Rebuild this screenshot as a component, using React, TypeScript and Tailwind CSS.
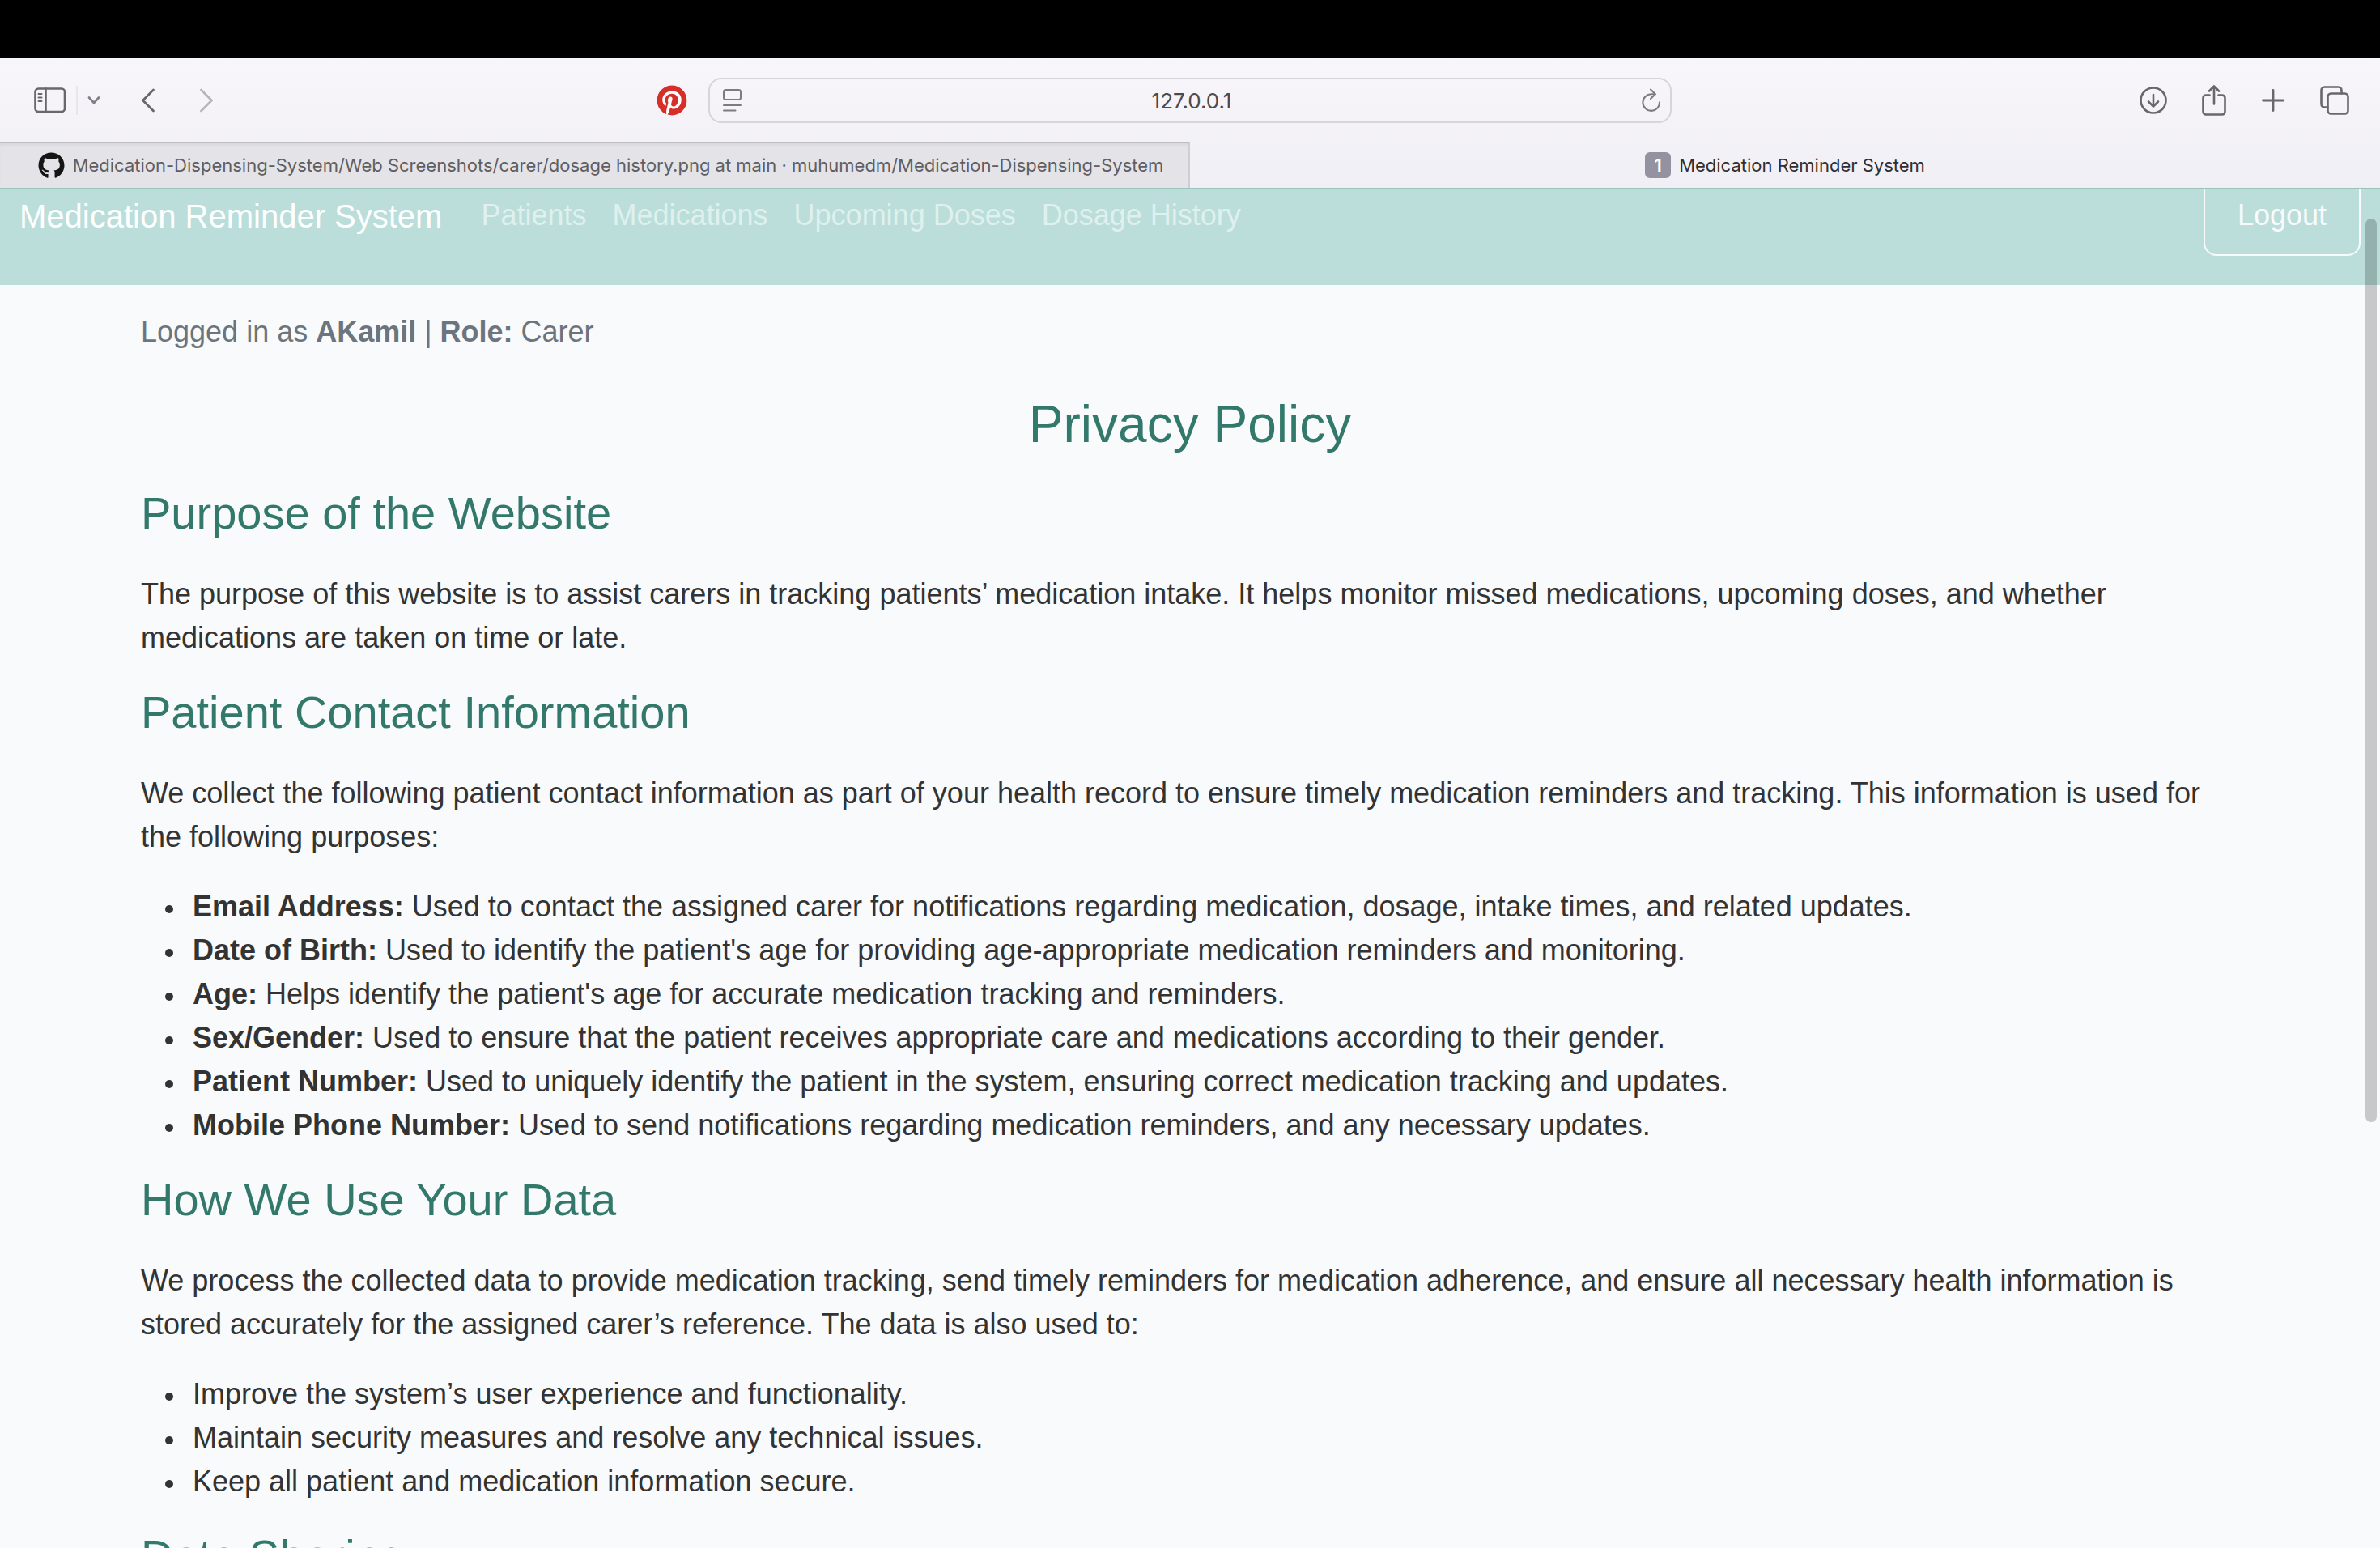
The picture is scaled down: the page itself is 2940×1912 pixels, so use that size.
import React from "react";
import { FaGithub, FaPinterest } from "react-icons/fa";

const stroke = {
  fill: "none",
  stroke: "currentColor",
  strokeLinecap: "round" as const,
  strokeLinejoin: "round" as const,
};

function SidebarIcon() {
  return (
    <svg width="40" height="32" viewBox="0 0 40 32" strokeWidth="2.6" {...stroke}>
      <rect x="1.5" y="1.5" width="36.5" height="28.5" rx="4" />
      <path d="M14.5 1.5v28.5" />
      <path d="M5.5 8h4M5.5 12.5h4M5.5 17h4" strokeWidth="2" />
    </svg>
  );
}

function ReaderIcon() {
  return (
    <svg width="24" height="28" viewBox="0 0 24 28" strokeWidth="2" {...stroke}>
      <rect x="1" y="1" width="21" height="12" rx="2.5" />
      <path d="M1 20h21M1 26.5h14.5" />
    </svg>
  );
}

function ReloadIcon() {
  return (
    <svg width="26" height="30" viewBox="0 0 26 30" strokeWidth="2.1" {...stroke}>
      <path d="M17.5 7.3H12.5A10.3 10.3 0 1 0 23 17.2" />
      <path d="M12 1.5L17.8 7.3L12 13" />
    </svg>
  );
}

function DownloadIcon() {
  return (
    <svg width="34" height="34" viewBox="0 0 34 34" strokeWidth="2.6" {...stroke}>
      <circle cx="17" cy="17" r="15.5" />
      <path d="M17 10v14.500M11 18.500l6 6 6-6" />
    </svg>
  );
}

function ShareIcon() {
  return (
    <svg width="30" height="38" viewBox="0 0 30 38" strokeWidth="2.6" {...stroke}>
      <path d="M9.5 12.5H5A3.5 3.5 0 0 0 1.5 16v17A3.5 3.5 0 0 0 5 36.5h20a3.5 3.5 0 0 0 3.5-3.5V16a3.5 3.5 0 0 0-3.5-3.5h-4.5" />
      <path d="M15 23.5V1.5M9 7.5l6-6 6 6" />
    </svg>
  );
}

function PlusIcon() {
  return (
    <svg width="28" height="28" viewBox="0 0 28 28" strokeWidth="2.8" {...stroke}>
      <path d="M14 1.5v25M1.5 14h25" />
    </svg>
  );
}

function TabsIcon() {
  return (
    <svg width="36" height="36" viewBox="0 0 36 36" strokeWidth="2.6" {...stroke}>
      <rect x="9.5" y="9.5" width="25" height="25" rx="4" />
      <path d="M9.5 26.5H5.5a4 4 0 0 1-4-4v-17a4 4 0 0 1 4-4h17a4 4 0 0 1 4 4v4" />
    </svg>
  );
}

function Toolbar() {
  return (
    <div className="grid h-[104px] grid-cols-[1fr_40.5%_1fr] items-center">
      <div className="flex items-center pl-[42px] pr-[26px] text-[#69676c]">
        <button aria-label="Toggle sidebar">
          <SidebarIcon />
        </button>
        <span className="ml-3 h-9 w-0.5 bg-[#e8e6ec]" />
        <button aria-label="Tab groups" className="ml-3 text-[#827f8c]">
          <svg width="16" height="12" viewBox="0 0 16 12" strokeWidth="2.8" {...stroke}>
            <path d="M2 2.5l6 6.5 6-6.5" />
          </svg>
        </button>
        <button aria-label="Back" className="ml-[50px]">
          <svg width="18" height="30" viewBox="0 0 18 30" strokeWidth="2.8" {...stroke}>
            <path d="M15.5 2L2.5 15l13 13" />
          </svg>
        </button>
        <button aria-label="Forward" disabled className="ml-[54px] text-[#b7b5bb]">
          <svg width="18" height="30" viewBox="0 0 18 30" strokeWidth="2.8" {...stroke}>
            <path d="M2.5 2l13 13-13 13" />
          </svg>
        </button>
        <button aria-label="Pinterest" className="ml-auto rounded-full bg-white text-[#d62f2a]">
          <FaPinterest size={38} />
        </button>
      </div>
      <div className="flex h-14 items-center rounded-2xl border-2 border-[#d7d5db] pl-4 pr-2.5 text-[#7d7b80]">
        <button aria-label="Reader">
          <ReaderIcon />
        </button>
        <input
          aria-label="Address"
          defaultValue="127.0.0.1"
          className="min-w-0 flex-1 bg-transparent text-center font-['Inter'] text-[26px] text-[#4b4a4d] outline-none"
        />
        <button aria-label="Reload">
          <ReloadIcon />
        </button>
      </div>
      <div className="flex items-center justify-end pr-[38px] text-[#69676c]">
        <button aria-label="Downloads">
          <DownloadIcon />
        </button>
        <button aria-label="Share" className="ml-[43px]">
          <ShareIcon />
        </button>
        <button aria-label="New tab" className="ml-11">
          <PlusIcon />
        </button>
        <button aria-label="Tab overview" className="ml-11">
          <TabsIcon />
        </button>
      </div>
    </div>
  );
}

function TabBar() {
  return (
    <div className="grid h-14 grid-cols-2 font-['Inter'] text-[22px]">
      <button className="flex items-center justify-center gap-2.5 border-r-2 border-t border-r-[#cfced3] border-t-[#bfbec4] bg-[#e4e3e8] pl-4 text-[#5f5e62] shadow-[inset_0_3px_3px_-1px_rgba(0,0,0,0.06)]">
        <FaGithub size={33} className="text-[#151515]" />
        <span className="whitespace-nowrap">
          Medication-Dispensing-System/Web Screenshots/carer/dosage history.png at main · muhumedm/Medication-Dispensing-System
        </span>
      </button>
      <button className="flex items-center justify-center gap-2.5 text-[#2f2e31]">
        <span className="flex size-8 items-center justify-center rounded-md bg-[#9492a0] font-semibold text-white">1</span>
        <span>Medication Reminder System</span>
      </button>
    </div>
  );
}

const links = ["Patients", "Medications", "Upcoming Doses", "Dosage History"];

function SiteNav() {
  return (
    <nav className="flex h-[120px] items-start border-t-2 border-[#9cc4be] bg-[#bbdeda] px-6 text-[36px] leading-[54px]">
      <a href="#" className="pt-[5px] text-[40px] leading-14 text-white">
        Medication Reminder System
      </a>
      <div className="ml-12 flex gap-8 pt-[5px] text-[#dff0ee]">
        {links.map((l) => (
          <a key={l} href="#">
            {l}
          </a>
        ))}
      </div>
      <button className="ml-auto rounded-b-2xl border-2 border-t-0 border-[#f8fafc] px-10 pb-[21px] pt-[5px] text-[#f8fafc]">
        Logout
      </button>
    </nav>
  );
}

function H2({ children }: { children: React.ReactNode }) {
  return <h2 className="mb-10 text-[56px] leading-[66px] text-[#33796b]">{children}</h2>;
}

function Bullet({ children }: { children: React.ReactNode }) {
  return (
    <li className="before:-ml-[34px] before:mb-1 before:mr-6 before:inline-block before:size-2.5 before:rounded-full before:bg-[#333333]">
      {children}
    </li>
  );
}

const info = [
  ["Email Address:", "Used to contact the assigned carer for notifications regarding medication, dosage, intake times, and related updates."],
  ["Date of Birth:", "Used to identify the patient's age for providing age-appropriate medication reminders and monitoring."],
  ["Age:", "Helps identify the patient's age for accurate medication tracking and reminders."],
  ["Sex/Gender:", "Used to ensure that the patient receives appropriate care and medications according to their gender."],
  ["Patient Number:", "Used to uniquely identify the patient in the system, ensuring correct medication tracking and updates."],
  ["Mobile Phone Number:", "Used to send notifications regarding medication reminders, and any necessary updates."],
];

const uses = [
  "Improve the system’s user experience and functionality.",
  "Maintain security measures and resolve any technical issues.",
  "Keep all patient and medication information secure.",
];

export default function App() {
  return (
    <div className="flex h-screen flex-col overflow-hidden bg-[#f8fafc] font-['Liberation_Sans',Arial,sans-serif]">
      <div className="h-[72px] shrink-0 bg-black" />
      <header className="shrink-0 bg-linear-to-b from-[#f8f6fb] to-[#f0eff5]">
        <Toolbar />
        <TabBar />
      </header>
      <div className="relative min-h-0 flex-1 overflow-hidden">
        <SiteNav />
        <main className="mx-auto max-w-[2640px] px-6 pt-[31px] text-[36px] leading-[54px] text-[#333333]">
          <p className="text-[#6c757d]">
            Logged in as <strong>AKamil</strong> | <strong>Role:</strong> Carer
          </p>
          <h1 className="mb-[38px] mt-[49px] text-center text-[64px] leading-[77px] text-[#33796b]">Privacy Policy</h1>
          <H2>Purpose of the Website</H2>
          <p className="mb-8">
            The purpose of this website is to assist carers in tracking patients’ medication intake. It helps monitor missed medications, upcoming doses, and whether medications are taken on time or late.
          </p>
          <H2>Patient Contact Information</H2>
          <p className="mb-8">
            We collect the following patient contact information as part of your health record to ensure timely medication reminders and tracking. This information is used for the following purposes:
          </p>
          <ul className="mb-8 pl-16">
            {info.map(([k, v]) => (
              <Bullet key={k}>
                <strong>{k}</strong> {v}
              </Bullet>
            ))}
          </ul>
          <H2>How We Use Your Data</H2>
          <p className="mb-8">
            We process the collected data to provide medication tracking, send timely reminders for medication adherence, and ensure all necessary health information is stored accurately for the assigned carer’s reference. The data is also used to:
          </p>
          <ul className="mb-8 pl-16">
            {uses.map((u) => (
              <Bullet key={u}>{u}</Bullet>
            ))}
          </ul>
          <H2>Data Sharing</H2>
        </main>
        <div className="absolute right-1 top-[38px] h-[1116px] w-3.5 rounded-full bg-black/20" />
      </div>
    </div>
  );
}
